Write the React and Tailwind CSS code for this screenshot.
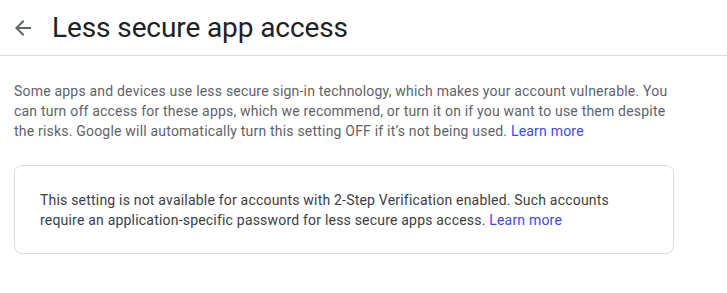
import React from "react";

export default function App() {
  return (
    <div className="w-[727px] h-[293px] bg-white" style={{ fontFamily: "Roboto, 'Liberation Sans', sans-serif" }}>
      <header className="h-[56px] flex items-center border-b border-[#dadce0]">
        <div className="w-[52px] flex items-center pl-[15px]">
          <svg width="16" height="16" viewBox="0 0 16 16" fill="none">
            <path d="M16 7H3.83l5.59-5.59L8 0 0 8l8 8 1.41-1.41L3.83 9H16V7z" fill="#5f6368" />
          </svg>
        </div>
        <h1 className="text-[28px] leading-[36px] text-[#202124] font-normal tracking-[-0.1px]">Less secure app access</h1>
      </header>
      <div className="px-[14px] pt-[25px] w-[688px]">
        <p className="text-[14px] leading-[20px] text-[#5f6368] tracking-[0.2px]">
          Some apps and devices use less secure sign-in technology, which makes your account vulnerable. You can turn off access for these apps, which we recommend, or turn it on if you want to use them despite the risks. Google will automatically turn this setting OFF if it’s not being used. <a className="text-[#3c4ae8]">Learn more</a>
        </p>
        <div className="mt-[24px] w-[660px] border border-[#dadce0] rounded-[8px] pl-[25px] pr-[24px] pt-[24px] pb-[23px]">
          <p className="text-[14px] leading-[20px] text-[#3c4043] tracking-[0.2px]">
            This setting is not available for accounts with 2-Step Verification enabled. Such accounts require an application-specific password for less secure apps access. <a className="text-[#3c4ae8]">Learn more</a>
          </p>
        </div>
      </div>
    </div>
  );
}
